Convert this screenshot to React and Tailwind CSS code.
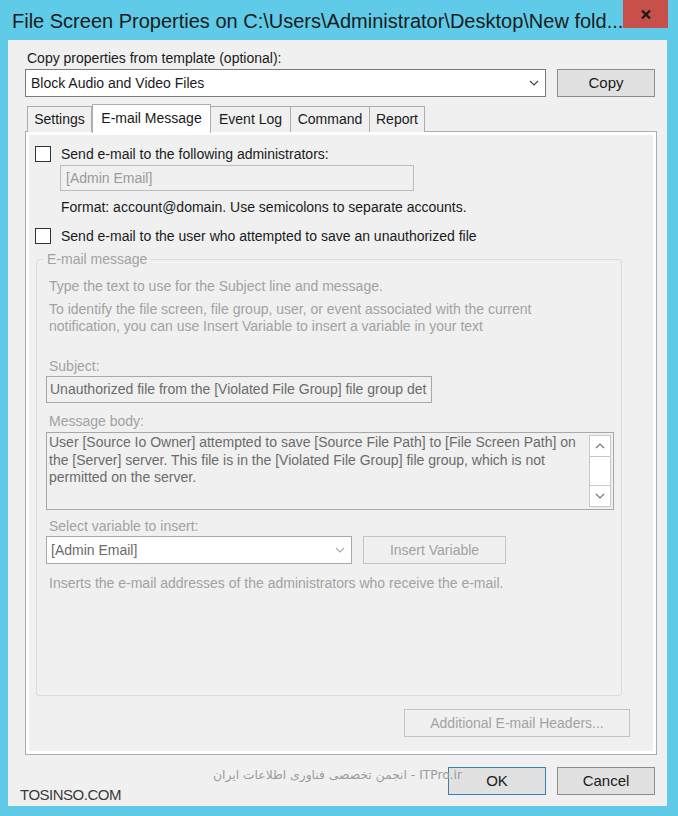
import React from 'react';

const font = { fontFamily: '"Segoe UI", "Liberation Sans", Arial, sans-serif' };

const Checkbox = () => (
  <span className="block w-[16px] h-[16px] border border-[#333] bg-white shrink-0" />
);

const Chevron = ({ up = false, color = '#555' }) => (
  <svg width="10" height="6" viewBox="0 0 10 6" className="block">
    <path d={up ? 'M1 5 L5 1 L9 5' : 'M1 1 L5 5 L9 1'} fill="none" stroke={color} strokeWidth="1.2" />
  </svg>
);

const tabs = ['Settings', 'E-mail Message', 'Event Log', 'Command', 'Report'];
const tabWidths = ['w-[65px]', 'w-[119px]', 'w-[81px]', 'w-[80px]', 'w-[56px]'];

export default function App() {
  return (
    <div className="w-[678px] h-[816px] bg-[#5fcbe8] relative overflow-hidden text-[14px] text-[#1a1a1a]" style={font}>
      {/* Title bar */}
      <div className="h-[40px] flex items-start">
        <div className="pl-[12px] pt-[8px] text-[20px] leading-[26px] text-[#1b1b1b] whitespace-nowrap">
          File Screen Properties on C:\Users\Administrator\Desktop\New fold...
        </div>
      </div>
      <div className="absolute top-0 left-[623px] w-[45px] h-[28px] bg-[#c7504b] flex items-center justify-center">
        <svg width="12" height="11" viewBox="0 0 12 11">
          <path d="M2 1.5 L10 9.5 M10 1.5 L2 9.5" stroke="#1a1a1a" strokeWidth="2.4" />
        </svg>
      </div>

      {/* Client area */}
      <div className="ml-[8px] w-[659px] h-[766px] bg-[#f0f0f0] flex flex-col pl-[17px] pr-[10px] pt-[8px]">
        <div className="pl-[2px] leading-[20px]">Copy properties from template (optional):</div>
        <div className="flex gap-[11px] mt-[1px]">
          <div className="w-[521px] h-[28px] bg-white border border-[#7a7a7a] flex items-center justify-between pl-[5px] pr-[6px]">
            <span>Block Audio and Video Files</span>
            <Chevron color="#444" />
          </div>
          <div className="w-[98px] h-[28px] bg-[#e1e1e1] border border-[#8c8c8c] flex items-center justify-center text-[15px]">Copy</div>
        </div>

        {/* Tabs */}
        <div className="flex items-end mt-[7px] pl-[3px] h-[28px] relative z-10">
          {tabs.map((t, i) =>
            i === 1 ? (
              <div key={t} className={`${tabWidths[i]} h-[29px] -mb-[1px] bg-white border border-[#adadad] border-b-0 flex items-start justify-center pt-[3px]`}>{t}</div>
            ) : (
              <div key={t} className={`${tabWidths[i]} h-[26px] bg-[#f0f0f0] border border-[#adadad] border-b-0 -ml-px flex items-center justify-center`}>{t}</div>
            )
          )}
        </div>

        {/* Tab panel */}
        <div className="w-[632px] h-[624px] border border-[#adadad] bg-white p-[3px] -mt-px">
          <div className="w-full h-full bg-[#f0f0f0] flex flex-col pl-[6px] pr-[6px] pt-[10px]">
            <div className="flex items-center gap-[10px] h-[18px]">
              <Checkbox />
              <span>Send e-mail to the following administrators:</span>
            </div>
            <div className="ml-[25px] mt-[2px] w-[354px] h-[26px] border border-[#bcbcbc] bg-[#f0f0f0] flex items-center pl-[5px] text-[#9a9a9a]">[Admin Email]</div>
            <div className="ml-[26px] mt-[7px] leading-[18px]">Format: account@domain. Use semicolons to separate accounts.</div>
            <div className="flex items-center gap-[10px] h-[18px] mt-[11px]">
              <Checkbox />
              <span>Send e-mail to the user who attempted to save an unauthorized file</span>
            </div>

            {/* Group box */}
            <div className="relative mt-[14px] ml-px w-[586px] h-[437px] border border-[#dcdcdc] rounded-[3px] text-[#a2a2a2] px-[9px]">
              <div className="absolute -top-[11px] left-[7px] px-[3px] bg-[#f0f0f0] leading-[20px]">E-mail message</div>
              <div className="mt-[16px] leading-[20px] pl-[3px]">Type the text to use for the Subject line and message.</div>
              <div className="mt-[5px] leading-[17px] pl-[3px]">
                To identify the file screen, file group, user, or event associated with the current<br />
                notification, you can use Insert Variable to insert a variable in your text
              </div>
              <div className="mt-[22px] leading-[18px] pl-[3px]">Subject:</div>
              <div className="mt-[1px] w-[386px] h-[27px] border border-[#a8a8a8] flex items-center pl-[3px] text-[#6b6b6b] whitespace-nowrap overflow-hidden">
                Unauthorized file from the [Violated File Group] file group det
              </div>
              <div className="mt-[9px] leading-[18px] pl-[3px]">Message body:</div>
              <div className="mt-[2px] w-[568px] h-[78px] border border-[#a8a8a8] flex text-[#6b6b6b]">
                <div className="flex-1 pl-[2px] pt-[1px] leading-[17.5px] whitespace-nowrap">
                  User [Source Io Owner] attempted to save [Source File Path] to [File Screen Path] on<br />
                  the [Server] server. This file is in the [Violated File Group] file group, which is not<br />
                  permitted on the server.
                </div>
                <div className="w-[22px] my-[2px] mr-[2px] border border-[#c8c8c8] bg-white flex flex-col">
                  <div className="h-[21px] border-b border-[#c8c8c8] flex items-center justify-center"><Chevron up color="#777" /></div>
                  <div className="flex-1" />
                  <div className="h-[21px] border-t border-[#c8c8c8] flex items-center justify-center"><Chevron color="#777" /></div>
                </div>
              </div>
              <div className="mt-[7px] leading-[18px] pl-[3px]">Select variable to insert:</div>
              <div className="flex items-center gap-[11px] mt-[1px]">
                <div className="w-[306px] h-[28px] bg-white border border-[#a8a8a8] flex items-center justify-between pl-[4px] pr-[6px] text-[#6b6b6b]">
                  <span>[Admin Email]</span>
                  <Chevron color="#aaa" />
                </div>
                <div className="w-[143px] h-[28px] border border-[#c4c4c4] flex items-center justify-center">Insert Variable</div>
              </div>
              <div className="mt-[10px] leading-[18px] pl-[3px]">Inserts the e-mail addresses of the administrators who receive the e-mail.</div>
            </div>

            <div className="flex justify-end mt-[13px] pr-[17px]">
              <div className="w-[226px] h-[28px] border border-[#c4c4c4] flex items-center justify-center text-[#a2a2a2]">Additional E-mail Headers...</div>
            </div>
          </div>
        </div>

        {/* Footer */}
        <div className="flex justify-end gap-[11px] mt-[12px] pr-[2px]">
          <div className="w-[98px] h-[28px] bg-[#e1e1e1] border border-[#3c7fb1] flex items-center justify-center text-[15px]">OK</div>
          <div className="w-[98px] h-[28px] bg-[#e1e1e1] border border-[#8c8c8c] flex items-center justify-center text-[15px]">Cancel</div>
        </div>
      </div>

      {/* Watermarks */}
      <div className="absolute left-[210px] top-[767px] w-[252px] text-[12.3px] leading-[16px] text-[#9c9c9c] whitespace-nowrap" dir="rtl" style={{ fontFamily: '"DejaVu Sans", "Noto Sans", sans-serif' }}>
        ITPro.ir - انجمن تخصصی فناوری اطلاعات ایران
      </div>
      <div className="absolute left-[20px] top-[786px] text-[15px] text-[#3a3a3a] tracking-[-0.5px] leading-[18px]" style={{ fontFamily: '"Liberation Sans", sans-serif' }}>TOSINSO.COM</div>
    </div>
  );
}
